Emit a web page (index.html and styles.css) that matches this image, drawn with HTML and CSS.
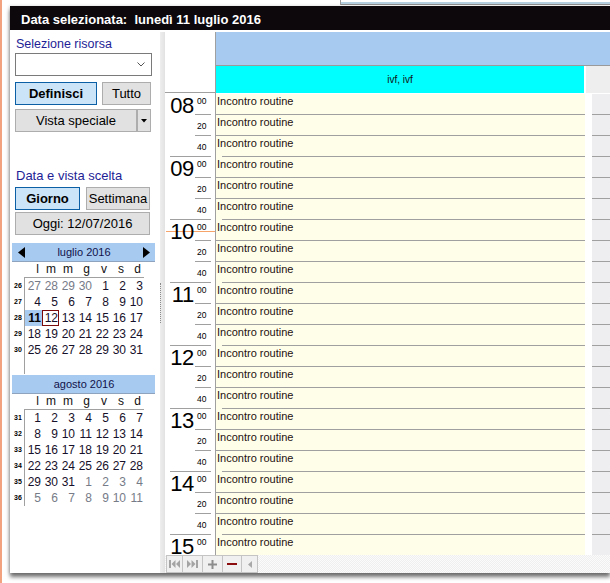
FILE: index.html
```html
<!DOCTYPE html>
<html lang="it">
<head>
<meta charset="utf-8">
<title>Agenda</title>
<link rel="stylesheet" href="styles.css">
</head>
<body>
<div class="backwin"></div>
<div class="dialog">
  <div class="titlebar">Data selezionata:&nbsp; lunedì 11 luglio 2016</div>
  <div class="body">
    <aside class="side">
      <div class="label l1">Selezione risorsa</div>
      <div class="select"><svg width="8" height="5" viewBox="0 0 8 5"><path d="M0.5 0.5 L4 4 L7.5 0.5" fill="none" stroke="#555" stroke-width="1"/></svg></div>
      <div class="btnrow r1">
        <div class="btn on w-def">Definisci</div>
        <div class="btn w-tutto">Tutto</div>
      </div>
      <div class="splitbtn">
        <div class="btn w-vista">Vista speciale</div>
        <div class="btn w-drop"><svg width="6" height="4" viewBox="0 0 6 4"><path d="M0 0H6L3 3.5Z" fill="#000"/></svg></div>
      </div>
      <div class="label l2">Data e vista scelta</div>
      <div class="btnrow r2">
        <div class="btn on w-giorno">Giorno</div>
        <div class="btn w-sett">Settimana</div>
      </div>
      <div class="btn w-oggi">Oggi: 12/07/2016</div>

      <div class="cal first">
        <div class="cal-head">
          <svg width="7" height="11" viewBox="0 0 7 11"><path d="M7 0V11L0 5.5Z" fill="#000"/></svg>
          <span>luglio 2016</span>
          <svg width="7" height="11" viewBox="0 0 7 11"><path d="M0 0V11L7 5.5Z" fill="#000"/></svg>
        </div>
        <div class="dow"><span>l</span><span>m</span><span>m</span><span>g</span><span>v</span><span>s</span><span>d</span></div>
        <div class="cal-body">
          <div class="wk"><div>26</div><div>27</div><div>28</div><div>29</div><div>30</div><div></div></div>
          <div class="days">
            <span class="o">27</span><span class="o">28</span><span class="o">29</span><span class="o">30</span><span>1</span><span>2</span><span>3</span>
            <span>4</span><span>5</span><span>6</span><span>7</span><span>8</span><span>9</span><span>10</span>
            <span class="sel">11</span><span class="cur">12</span><span>13</span><span>14</span><span>15</span><span>16</span><span>17</span>
            <span>18</span><span>19</span><span>20</span><span>21</span><span>22</span><span>23</span><span>24</span>
            <span>25</span><span>26</span><span>27</span><span>28</span><span>29</span><span>30</span><span>31</span>
          </div>
        </div>
      </div>

      <div class="cal">
        <div class="cal-head center">
          <span>agosto 2016</span>
        </div>
        <div class="dow"><span>l</span><span>m</span><span>m</span><span>g</span><span>v</span><span>s</span><span>d</span></div>
        <div class="cal-body">
          <div class="wk"><div>31</div><div>32</div><div>33</div><div>34</div><div>35</div><div>36</div></div>
          <div class="days">
            <span>1</span><span>2</span><span>3</span><span>4</span><span>5</span><span>6</span><span>7</span>
            <span>8</span><span>9</span><span>10</span><span>11</span><span>12</span><span>13</span><span>14</span>
            <span>15</span><span>16</span><span>17</span><span>18</span><span>19</span><span>20</span><span>21</span>
            <span>22</span><span>23</span><span>24</span><span>25</span><span>26</span><span>27</span><span>28</span>
            <span>29</span><span>30</span><span>31</span><span class="o">1</span><span class="o">2</span><span class="o">3</span><span class="o">4</span>
            <span class="o">5</span><span class="o">6</span><span class="o">7</span><span class="o">8</span><span class="o">9</span><span class="o">10</span><span class="o">11</span>
          </div>
        </div>
      </div>
    </aside>

    <div class="splitter"><div class="grip"></div></div>

    <main class="main">
      <div class="head">
        <div class="corner"></div>
        <div class="dayhead">
          <div class="band"></div>
          <div class="resrow">
            <div class="res">ivf, ivf</div>
            <div class="resgap"></div>
            <div class="resgray"></div>
          </div>
        </div>
      </div>

      <div class="rows">
        <div class="row"><div class="t"><span class="hr">08</span><span class="m">00</span></div><div class="ev">Incontro routine</div><div class="gp"></div><div class="gr"></div></div>
        <div class="row"><div class="t"><span class="m mm">20</span></div><div class="ev">Incontro routine</div><div class="gp"></div><div class="gr"></div></div>
        <div class="row r40"><div class="t"><span class="m mm">40</span></div><div class="ev">Incontro routine</div><div class="gp"></div><div class="gr"></div></div>

        <div class="row"><div class="t"><span class="hr">09</span><span class="m">00</span></div><div class="ev">Incontro routine</div><div class="gp"></div><div class="gr"></div></div>
        <div class="row"><div class="t"><span class="m mm">20</span></div><div class="ev">Incontro routine</div><div class="gp"></div><div class="gr"></div></div>
        <div class="row r40"><div class="t"><span class="m mm">40</span></div><div class="ev">Incontro routine</div><div class="gp"></div><div class="gr"></div></div>

        <div class="row now"><div class="t"><span class="hr">10</span><span class="m">00</span></div><div class="ev">Incontro routine</div><div class="gp"></div><div class="gr"></div></div>
        <div class="row"><div class="t"><span class="m mm">20</span></div><div class="ev">Incontro routine</div><div class="gp"></div><div class="gr"></div></div>
        <div class="row r40"><div class="t"><span class="m mm">40</span></div><div class="ev">Incontro routine</div><div class="gp"></div><div class="gr"></div></div>

        <div class="row"><div class="t"><span class="hr">11</span><span class="m">00</span></div><div class="ev">Incontro routine</div><div class="gp"></div><div class="gr"></div></div>
        <div class="row"><div class="t"><span class="m mm">20</span></div><div class="ev">Incontro routine</div><div class="gp"></div><div class="gr"></div></div>
        <div class="row r40"><div class="t"><span class="m mm">40</span></div><div class="ev">Incontro routine</div><div class="gp"></div><div class="gr"></div></div>

        <div class="row"><div class="t"><span class="hr">12</span><span class="m">00</span></div><div class="ev">Incontro routine</div><div class="gp"></div><div class="gr"></div></div>
        <div class="row"><div class="t"><span class="m mm">20</span></div><div class="ev">Incontro routine</div><div class="gp"></div><div class="gr"></div></div>
        <div class="row r40"><div class="t"><span class="m mm">40</span></div><div class="ev">Incontro routine</div><div class="gp"></div><div class="gr"></div></div>

        <div class="row"><div class="t"><span class="hr">13</span><span class="m">00</span></div><div class="ev">Incontro routine</div><div class="gp"></div><div class="gr"></div></div>
        <div class="row"><div class="t"><span class="m mm">20</span></div><div class="ev">Incontro routine</div><div class="gp"></div><div class="gr"></div></div>
        <div class="row r40"><div class="t"><span class="m mm">40</span></div><div class="ev">Incontro routine</div><div class="gp"></div><div class="gr"></div></div>

        <div class="row"><div class="t"><span class="hr">14</span><span class="m">00</span></div><div class="ev">Incontro routine</div><div class="gp"></div><div class="gr"></div></div>
        <div class="row"><div class="t"><span class="m mm">20</span></div><div class="ev">Incontro routine</div><div class="gp"></div><div class="gr"></div></div>
        <div class="row r40"><div class="t"><span class="m mm">40</span></div><div class="ev">Incontro routine</div><div class="gp"></div><div class="gr"></div></div>

        <div class="row"><div class="t"><span class="hr">15</span><span class="m">00</span></div><div class="ev">Incontro routine</div><div class="gp"></div><div class="gr"></div></div>
      </div>

      <div class="toolbar">
        <div class="tb w17"><svg width="11" height="8" viewBox="0 0 11 8"><path d="M0 0h2v8h-2z M6.5 0v8L2.5 4z M11 0v8L7 4z" fill="#a4a4a4"/></svg></div>
        <div class="tb w20"><svg width="11" height="8" viewBox="0 0 11 8"><path d="M9 0h2v8h-2z M4.5 0v8L8.5 4z M0 0v8L4 4z" fill="#a4a4a4"/></svg></div>
        <div class="tb w20"><svg width="9" height="9" viewBox="0 0 9 9"><path d="M3.5 0h2v9h-2z M0 3.5h9v2h-9z" fill="#8e8e8e"/></svg></div>
        <div class="tb w19"><svg width="10" height="2" viewBox="0 0 10 2"><rect width="10" height="2" fill="#8b0d0d"/></svg></div>
        <div class="tb w16"><svg width="4" height="7" viewBox="0 0 4 7"><path d="M4 0v7L0 3.5z" fill="#a8a8a8"/></svg></div>
      </div>
    </main>
  </div>
</div>
</body>
</html>
```

FILE: styles.css
```css
* { box-sizing: border-box; }
html, body { margin: 0; padding: 0; }
body {
  width: 610px;
  height: 583px;
  overflow: hidden;
  background: #fff;
  border-left: 2px solid #f2a27e;
  padding-top: 6px;
  position: relative;
  font-family: "Liberation Sans", Arial, sans-serif;
}

/* window behind the dialog */
.backwin {
  position: absolute;
  top: 0;
  left: 338px;
  width: 280px;
  height: 5px;
  border-left: 1px solid #9a9a9a;
  background: linear-gradient(#fff 0 2px, #b4cfdf 2px 4px, #8c8c8c 4px 5px);
}

.dialog {
  margin-left: 8px;
  width: 600px;
  height: 567px;
  background: #fff;
  box-shadow: 0 4px 4px rgba(0,0,0,.55), -1px 0 3px rgba(0,0,0,.15);
  display: flex;
  flex-direction: column;
}

.titlebar {
  flex: none;
  height: 24px;
  background: #0c080c;
  color: #fff;
  font-weight: bold;
  font-size: 13px;
  line-height: 21px;
  padding: 3px 0 0 11px;
  white-space: nowrap;
}

.body {
  display: flex;
  margin-top: 2px;
  height: 541px;
}

/* ---------- side panel ---------- */
.side {
  flex: none;
  width: 150px;
  padding-left: 5px;
}
.label {
  font-size: 12.5px;
  color: #1e1e96;
  height: 16px;
  line-height: 16px;
  padding-left: 1px;
  white-space: nowrap;
}
.l1 { margin-top: 4px; }
.l2 { margin-top: 36px; font-size: 13px; }

.select {
  margin-top: 1px;
  width: 137px;
  height: 23px;
  border: 1px solid #7a7a7a;
  display: flex;
  align-items: center;
  justify-content: flex-end;
  padding-right: 6px;
}

.btn {
  height: 23px;
  border: 1px solid #adadad;
  background: #e1e1e1;
  color: #000;
  font-size: 13px;
  display: flex;
  align-items: center;
  justify-content: center;
  white-space: nowrap;
}
.btn.on {
  background: #cce4f7;
  border-color: #0b5fa5;
  font-weight: bold;
}
.btnrow { display: flex; }
.r1 { margin-top: 6px; gap: 5px; }
.r2 { margin-top: 3px; gap: 6px; }
.w-def { width: 82px; }
.w-tutto { width: 49px; }
.splitbtn { display: flex; margin-top: 4px; }
.w-vista { width: 122px; }
.w-drop { width: 14px; }
.w-giorno { width: 65px; }
.w-sett { width: 64px; }
.w-oggi { width: 135px; margin-top: 2px; }

/* ---------- calendars ---------- */
.cal {
  margin-left: -3px;
  width: 143px;
  margin-top: 1px;
}
.cal.first { margin-top: 8px; }
.cal-head {
  height: 19px;
  background: #a6caf0;
  border-bottom: 1px solid #8ea3be;
  display: flex;
  align-items: center;
  justify-content: space-between;
  padding: 0 5px 0 6px;
  font-size: 11px;
  color: #12124a;
}
.cal-head.center { justify-content: center; }
.dow {
  display: grid;
  grid-template-columns: repeat(7, 17px);
  margin-left: 13px;
  height: 15px;
  font-size: 12px;
  line-height: 15px;
  color: #111;
}
.dow span { text-align: right; padding-right: 3px; }
.cal-body { display: flex; }
.wk { width: 12px; padding-top: 1px; }
.wk div {
  height: 16px;
  line-height: 16px;
  font-size: 7px;
  font-weight: bold;
  text-align: center;
  color: #000;
}
.days {
  border-left: 1px solid #a0a0a0;
  border-top: 1px solid #a0a0a0;
  display: grid;
  grid-template-columns: repeat(7, 17px);
  grid-auto-rows: 16px;
  height: 97px;
  align-content: start;
}
.days span {
  font-size: 12px;
  line-height: 16px;
  text-align: right;
  padding-right: 1px;
  color: #16102a;
}
.days span.o { color: #767b88; }
.days span.sel { background: #a6caf0; font-weight: bold; color: #000; }
.days span.cur { box-shadow: inset 0 0 0 1px #7d0a0a; }

/* ---------- splitter ---------- */
.splitter {
  flex: none;
  width: 5px;
  background: linear-gradient(to right, #eeeeee, #e2e2e2);
  display: flex;
  align-items: center;
}
.grip {
  width: 1px;
  height: 40px;
  border-left: 1px dotted #8a8a8a;
}

/* ---------- main schedule ---------- */
.main {
  flex: 1;
  min-width: 0;
  display: flex;
  flex-direction: column;
  overflow: hidden;
}
.head { flex: none; height: 61px; display: flex; }
.corner {
  width: 51px;
  flex: none;
  border-right: 1px solid #a0a0a0;
  border-bottom: 1px solid #a0a0a0;
}
.dayhead { flex: 1; display: flex; flex-direction: column; }
.band {
  height: 34px;
  background: #a6caf0;
  border-bottom: 1px solid #9a9a9a;
}
.resrow { height: 27px; display: flex; }
.res {
  width: 368px;
  flex: none;
  background: #00ffff;
  font-size: 10px;
  line-height: 27px;
  text-align: center;
  color: #111;
}
.resgap { width: 2px; flex: none; }
.resgray { flex: 1; background: #eeeeee; }

.rows {
  flex: none;
  height: 462px;
  overflow: hidden;
  padding-top: 1px;
  background: linear-gradient(#a0a0a0, #a0a0a0) no-repeat 50px 0 / 1px 100%;
}
.row { display: flex; height: 21px; }
.t {
  width: 51px;
  flex: none;
  display: flex;
  align-items: flex-start;
  padding-left: 5px;
  color: #000;
  background: linear-gradient(#a0a0a0, #a0a0a0) no-repeat 30px 20px / 16px 1px;
}
.r40 .t {
  background: linear-gradient(#a0a0a0, #a0a0a0) no-repeat 5px 20px / 41px 1px;
}
.now .t {
  background:
    linear-gradient(#f6a46a, #f6a46a) no-repeat 1px 11px / 49px 1px,
    linear-gradient(#a0a0a0, #a0a0a0) no-repeat 30px 20px / 16px 1px;
}
.hr {
  width: 24px;
  flex: none;
  text-align: right;
  font-size: 22px;
  line-height: 16px;
  height: 16px;
  margin-top: 4px;
  letter-spacing: -0.3px;
}
.m {
  margin-left: 3px;
  margin-top: 3px;
  font-size: 8.5px;
  line-height: 9px;
}
.m.mm { margin-left: 27px; margin-top: 7px; }

.ev {
  width: 369px;
  flex: none;
  background: #fffee9;
  border-bottom: 1px solid #a0a0a0;
  font-size: 11px;
  line-height: 13px;
  padding: 1px 0 0 1px;
  color: #241010;
  white-space: nowrap;
}
.r40 .ev {
  border-bottom: none;
  background: linear-gradient(#a0a0a0, #a0a0a0) no-repeat 6px 20px / 363px 1px, #fffee9;
}
.gp { width: 7px; flex: none; }
.gr { flex: 1; background: #eeeef0; border-bottom: 1px solid #a0a0a0; }

/* ---------- toolbar ---------- */
.toolbar {
  flex: none;
  height: 18px;
  display: flex;
  padding-left: 1px;
  background: repeating-conic-gradient(#efefef 0 25%, #fbfbfb 0 50%) 0 0 / 2px 2px;
}
.tb {
  height: 18px;
  border: 1px solid #c4c4c4;
  background: #f0f0f0;
  display: flex;
  align-items: center;
  justify-content: center;
}
.tb + .tb { margin-left: -1px; }
.w17 { width: 17px; }
.w20 { width: 21px; }
.w19 { width: 20px; }
.w16 { width: 17px; }
```
